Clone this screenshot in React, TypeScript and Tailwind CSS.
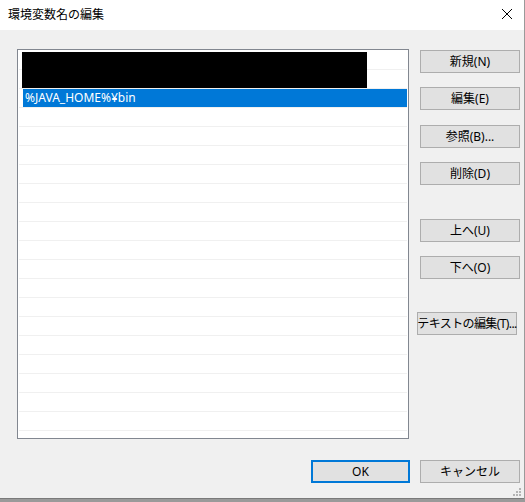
import React from "react";

const font = { fontFamily: '"Noto Sans", "Noto Sans CJK JP", sans-serif' };

function Btn({ label, className = "" }: { label: string; className?: string }) {
  return (
    <div
      className={`h-[23px] w-[100px] bg-[#e1e1e1] border border-[#adadad] flex items-center justify-center whitespace-nowrap text-[12px] leading-none text-black ${className}`}
    >
      {label}
    </div>
  );
}

export default function App() {
  const rows = Array.from({ length: 21 });
  return (
    <div
      className="w-[525px] h-[502px] bg-[#9a9a9a] overflow-hidden"
      style={font}
    >
      <div className="w-[524px] h-[499px] bg-[#f0f0f0] border-b border-[#7a7a7a] relative flex flex-col">
        {/* title bar */}
        <div className="h-[30px] bg-white flex items-center justify-between pl-[8px] pr-[11px] shrink-0">
          <span className="text-[12px] text-black leading-none">環境変数名の編集</span>
          <svg width="12" height="12" viewBox="0 0 12 12" className="mt-[-2px]">
            <path d="M1 1 L11 11 M11 1 L1 11" stroke="#000" strokeWidth="1" fill="none" />
          </svg>
        </div>

        {/* body */}
        <div className="flex pl-[17px] pt-[19px]">
          {/* list */}
          <div className="relative w-[392px] h-[390px] bg-white border border-[#828790] overflow-hidden pt-[1px] px-[1px]">
            {rows.map((_, i) => (
              <div key={i} className="h-[19px] border-b border-[#f0f0f0] flex">
                {i === 2 && (
                  <div className="ml-[4px] flex-1 bg-[#0078d7] text-white text-[12px] leading-none flex items-center pl-[2px]">
                    %JAVA_HOME%¥bin
                  </div>
                )}
              </div>
            ))}
            <div className="absolute left-[4px] top-[2px] w-[345px] h-[36px] bg-black" />
          </div>

          {/* right buttons */}
          <div className="flex flex-col ml-[11px] pt-[1px]">
            <Btn label="新規(N)" />
            <Btn label="編集(E)" className="mt-[14px]" />
            <Btn label="参照(B)..." className="mt-[15px]" />
            <Btn label="削除(D)" className="mt-[14px]" />
            <Btn label="上へ(U)" className="mt-[34px]" />
            <Btn label="下へ(O)" className="mt-[14px]" />
            <Btn label="テキストの編集(T)..." className="mt-[33px] ml-[-3px] tracking-[-0.6px]" />
          </div>
        </div>

        {/* bottom buttons */}
        <div className="flex justify-end pr-[4px] mt-[21px]">
          <div className="h-[23px] w-[99px] bg-[#e1e1e1] border-2 border-[#0078d7] flex items-center justify-center text-[12px] leading-none text-black">
            OK
          </div>
          <Btn label="キャンセル" className="ml-[10px]" />
        </div>

        {/* resize grip */}
        <svg width="8" height="8" viewBox="0 0 8 8" className="absolute right-[3px] bottom-[2px]">
          <rect x="6" y="0" width="2" height="2" fill="#b4b4b4" />
          <rect x="3" y="3" width="2" height="2" fill="#b4b4b4" />
          <rect x="6" y="3" width="2" height="2" fill="#b4b4b4" />
          <rect x="0" y="6" width="2" height="2" fill="#b4b4b4" />
          <rect x="3" y="6" width="2" height="2" fill="#b4b4b4" />
          <rect x="6" y="6" width="2" height="2" fill="#b4b4b4" />
        </svg>
      </div>
    </div>
  );
}
